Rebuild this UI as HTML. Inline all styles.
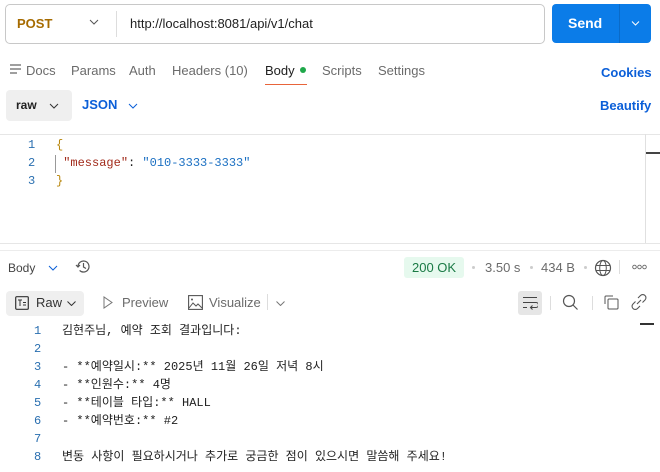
<!DOCTYPE html>
<html><head><meta charset="utf-8"><style>
*{box-sizing:border-box;margin:0;padding:0}
body{width:660px;height:472px;background:#fff;font-family:"Liberation Sans",sans-serif;color:#212121;position:relative;overflow:hidden;font-size:13px}
.a{position:absolute;white-space:nowrap}
.mono{font-family:"Liberation Mono","Noto Sans CJK KR",monospace;font-size:12px}
.g{color:#6b6b6b}
.blue{color:#0b5fd8}
svg{position:absolute}
</style></head><body>
<div class="a" style="left:5px;top:4px;width:540px;height:40px;border:1px solid #c8c8c8;border-radius:5px"></div>
<div class="a" style="left:17px;top:16px;color:#a66b00;font-weight:bold;font-size:13px">POST</div>
<svg style="left:89px;top:19px" width="10" height="6"><path d="M1 1l4 4 4-4" stroke="#555" fill="none"/></svg>
<div class="a" style="left:116px;top:11px;width:1px;height:26px;background:#ddd"></div>
<div class="a" style="left:130px;top:16px;font-size:13px">http://localhost:8081/api/v1/chat</div>
<div class="a" style="left:552px;top:4px;width:99px;height:39px;background:#0b7ce8;border-radius:4px"></div>
<div class="a" style="left:619px;top:4px;width:1px;height:39px;background:#0a6bc9"></div>
<div class="a" style="left:568px;top:15px;color:#fff;font-weight:bold;font-size:14px">Send</div>
<svg style="left:631px;top:21px" width="9" height="5"><path d="M1 .5l3.5 3.5 3.5-3.5" stroke="#fff" fill="none"/></svg>

<svg style="left:10px;top:64px" width="12" height="11"><path d="M0 1h11M0 5h11M0 9h7" stroke="#666" stroke-width="1.2"/></svg>
<div class="a g" style="left:26px;top:63px">Docs</div>
<div class="a g" style="left:71px;top:63px">Params</div>
<div class="a g" style="left:129px;top:63px">Auth</div>
<div class="a g" style="left:172px;top:63px">Headers (10)</div>
<div class="a" style="left:265px;top:63px">Body</div>
<div class="a" style="left:300px;top:67px;width:6px;height:6px;border-radius:50%;background:#1fa84a"></div>
<div class="a" style="left:265px;top:84px;width:42px;height:1px;background:#e8643a"></div>
<div class="a g" style="left:322px;top:63px">Scripts</div>
<div class="a g" style="left:378px;top:63px">Settings</div>
<div class="a blue" style="left:601px;top:65px;font-weight:bold">Cookies</div>

<div class="a" style="left:6px;top:90px;width:66px;height:31px;background:#efefef;border-radius:4px"></div>
<div class="a" style="left:16px;top:98px;font-weight:bold;font-size:12px">raw</div>
<svg style="left:49px;top:103px" width="10" height="6"><path d="M1 1l4 4 4-4" stroke="#333" fill="none"/></svg>
<div class="a blue" style="left:82px;top:97px;font-weight:bold">JSON</div>
<svg style="left:128px;top:103px" width="10" height="6"><path d="M1 1l4 4 4-4" stroke="#0b5fd8" fill="none"/></svg>
<div class="a blue" style="left:600px;top:98px;font-weight:bold">Beautify</div>

<div class="a" style="left:0;top:134px;width:660px;height:1px;background:#e6e6e6"></div>
<div class="a" style="left:645px;top:134px;width:1px;height:110px;background:#e0e0e0"></div>
<div class="a" style="left:646px;top:152px;width:14px;height:2px;background:#444"></div>
<div class="a" style="left:0;top:243px;width:660px;height:1px;background:#e6e6e6"></div>
<div class="a" style="left:0;top:250px;width:660px;height:1px;background:#ececec"></div>

<div class="a mono" style="left:28px;top:136px;color:#2a6fb0;line-height:18px">1<br>2<br>3</div>
<div class="a mono" style="left:56px;top:136px;line-height:18px"><span style="color:#b8860b">{</span><br>&nbsp;<span style="color:#a12a1a">"message"</span>: <span style="color:#1a6fc2">"010-3333-3333"</span><br><span style="color:#b8860b">}</span></div>
<div class="a" style="left:55px;top:155px;width:1px;height:18px;background:#999"></div>

<div class="a g" style="left:8px;top:261px;font-size:12px;color:#444">Body</div>
<svg style="left:48px;top:265px" width="10" height="6"><path d="M1 1l4 4 4-4" stroke="#0b5fd8" fill="none"/></svg>
<svg style="left:75px;top:258px" width="17" height="17" viewBox="0 0 17 17"><path d="M3 8.5A5.5 5.5 0 1 1 4.6 12.4M1 7l2 2 2-2M8.5 5v4l2.5 1.5" stroke="#555" fill="none" stroke-width="1.2"/></svg>
<div class="a" style="left:404px;top:257px;width:60px;height:21px;background:#e6f9ee;border-radius:3px"></div>
<div class="a" style="left:412px;top:260px;color:#1a7a45">200 OK</div>
<div class="a" style="left:472px;top:266px;width:3px;height:3px;border-radius:50%;background:#ccc"></div>
<div class="a g" style="left:485px;top:260px">3.50 s</div>
<div class="a" style="left:530px;top:266px;width:3px;height:3px;border-radius:50%;background:#ccc"></div>
<div class="a g" style="left:541px;top:260px">434 B</div>
<div class="a" style="left:584px;top:266px;width:3px;height:3px;border-radius:50%;background:#ccc"></div>
<svg style="left:594px;top:259px" width="18" height="18" viewBox="0 0 18 18"><circle cx="9" cy="9" r="7.5" stroke="#555" fill="none" stroke-width="1.2"/><ellipse cx="9" cy="9" rx="3.3" ry="7.5" stroke="#555" fill="none"/><path d="M2 6.5h14M2 11.5h14" stroke="#555"/></svg>
<div class="a" style="left:619px;top:260px;width:1px;height:14px;background:#ddd"></div>
<svg style="left:632px;top:264px" width="16" height="6"><circle cx="2.5" cy="3" r="1.8" stroke="#666" fill="none" stroke-width=".9"/><circle cx="7.5" cy="3" r="1.8" stroke="#666" fill="none" stroke-width=".9"/><circle cx="12.5" cy="3" r="1.8" stroke="#666" fill="none" stroke-width=".9"/></svg>

<div class="a" style="left:6px;top:291px;width:78px;height:25px;background:#efefef;border-radius:4px"></div>
<svg style="left:15px;top:296px" width="14" height="14" viewBox="0 0 14 14"><rect x=".7" y=".7" width="12.6" height="12.6" rx="1" stroke="#333" fill="none" stroke-width="1.2"/><path d="M3 4h4M5 4v6M8 6.5h3M8 9h3" stroke="#333"/></svg>
<div class="a" style="left:36px;top:295px;color:#333">Raw</div>
<svg style="left:67px;top:301px" width="9" height="5"><path d="M.5.5l4 4 4-4" stroke="#333" fill="none"/></svg>
<svg style="left:103px;top:296px" width="10" height="13"><path d="M1 1v11l8-5.5z" stroke="#777" fill="none"/></svg>
<div class="a g" style="left:122px;top:295px">Preview</div>
<svg style="left:188px;top:295px" width="15" height="15" viewBox="0 0 15 15"><rect x=".6" y=".6" width="13.8" height="13.8" stroke="#555" fill="none" stroke-width="1.1"/><path d="M1 13l4-5 3 3 2-2 4 4" stroke="#555" fill="none"/><circle cx="4" cy="4.5" r="1" fill="#555"/></svg>
<div class="a g" style="left:209px;top:295px">Visualize</div>
<div class="a" style="left:267px;top:294px;width:1px;height:16px;background:#ddd"></div>
<svg style="left:276px;top:301px" width="9" height="5"><path d="M.5.5l4 4 4-4" stroke="#777" fill="none"/></svg>

<div class="a" style="left:518px;top:291px;width:24px;height:24px;background:#e6e6e6;border-radius:3px"></div>
<svg style="left:522px;top:296px" width="16" height="14" viewBox="0 0 16 14"><path d="M1 1.5h14M1 6.5h13a2.5 2.5 0 0 1 0 5H9M1 11.5h4M10.5 9.5l-2 2 2 2" stroke="#444" fill="none" stroke-width="1.1"/></svg>
<div class="a" style="left:550px;top:296px;width:1px;height:14px;background:#ddd"></div>
<svg style="left:562px;top:294px" width="17" height="17"><circle cx="7" cy="7" r="5.5" stroke="#555" fill="none" stroke-width="1.2"/><path d="M11 11l4.5 4.5" stroke="#555" stroke-width="1.2"/></svg>
<div class="a" style="left:592px;top:296px;width:1px;height:14px;background:#ddd"></div>
<svg style="left:604px;top:295px" width="15" height="15"><path d="M1 9V2a1 1 0 0 1 1-1h7" stroke="#555" fill="none"/><rect x="4" y="4" width="10" height="10" rx="1" stroke="#555" fill="none"/></svg>
<svg style="left:631px;top:294px" width="16" height="16" viewBox="0 0 16 16"><path d="M7 4l2.5-2.5a3 3 0 0 1 4.5 4.5L11.5 8.5M9 12l-2.5 2.5A3 3 0 0 1 2 10l2.5-2.5M10 6l-4 4" stroke="#555" fill="none" stroke-width="1.1"/></svg>
<div class="a" style="left:640px;top:323px;width:14px;height:2px;background:#333"></div>

<div class="a mono" style="left:34px;top:322px;color:#2a6fb0;line-height:18px">1<br>2<br>3<br>4<br>5<br>6<br>7<br>8</div>
<div class="a mono" style="left:62px;top:322px;line-height:18px;color:#222">김현주님, 예약 조회 결과입니다:<br>&nbsp;<br>- **예약일시:** 2025년 11월 26일 저녁 8시<br>- **인원수:** 4명<br>- **테이블 타입:** HALL<br>- **예약번호:** #2<br>&nbsp;<br>변동 사항이 필요하시거나 추가로 궁금한 점이 있으시면 말씀해 주세요!</div>
</body></html>
